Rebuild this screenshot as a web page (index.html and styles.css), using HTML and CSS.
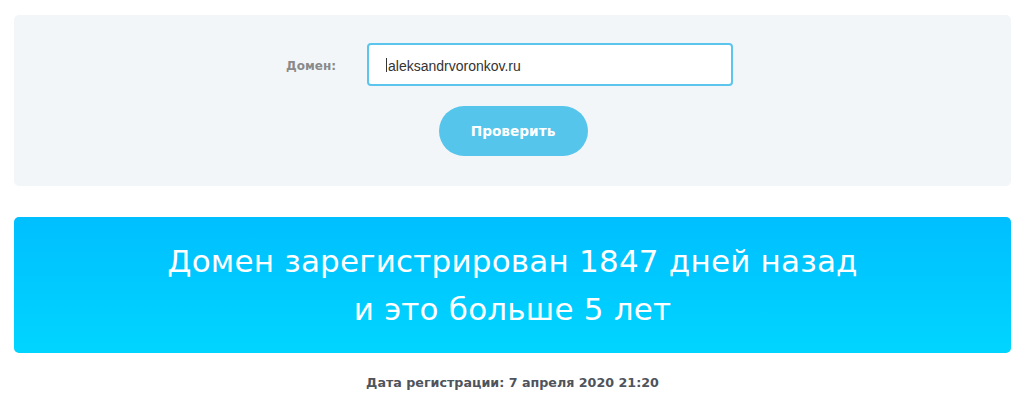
FILE: index.html
```html
<!DOCTYPE html>
<html lang="ru">
<head>
<meta charset="utf-8">
<title>Проверка домена</title>
<link rel="stylesheet" href="styles.css">
</head>
<body>
<div class="page">
  <form class="check-box">
    <div class="row">
      <label class="label" for="domain">Домен:</label>
      <div class="field"><span class="caret"></span><input id="domain" class="input" type="text" value="aleksandrvoronkov.ru"></div>
    </div>
    <button type="button" class="btn">Проверить</button>
  </form>
  <div class="result">
    <p class="result-text">Домен зарегистрирован 1847 дней назад<br>и это больше 5 лет</p>
  </div>
  <p class="date">Дата регистрации: 7 апреля 2020 21:20</p>
</div>
</body>
</html>
```

FILE: styles.css
```css
* { box-sizing: border-box; }
html, body { margin: 0; padding: 0; background: #fff; }
body { font-family: "DejaVu Sans", "Open Sans", sans-serif; }
.page { padding: 15px 20px 0 14px; }
.check-box {
  background: #f3f6f8;
  border-radius: 5px;
  height: 171px;
  padding-top: 28px;
  display: flex;
  flex-direction: column;
  align-items: center;
  margin: 0;
}
.row { display: flex; align-items: center; margin-left: -6px; }
.label {
  width: 81px;
  font-size: 12px;
  font-weight: 700;
  color: #8a8a8a;
  padding-top: 2px;
}
.field { position: relative; }
.caret {
  position: absolute; left: 19px; top: 15px;
  width: 1px; height: 14px; background: #333;
}
.input {
  width: 366px;
  height: 43px;
  border: 2px solid #5bc5ee;
  border-radius: 4px;
  padding: 2px 0 0 19px;
  font-family: "Liberation Sans", Arial, sans-serif;
  font-size: 14px;
  color: #333;
  background: #fff;
  outline: none;
}
.btn {
  margin-top: 20px;
  width: 149px;
  height: 50px;
  border: 0;
  border-radius: 25px;
  background: #56c5eb;
  color: #fff;
  font-family: inherit;
  font-size: 13.7px;
  font-weight: 700;
  margin-left: 1px;
}
.result {
  margin-top: 31px;
  height: 136px;
  border-radius: 5px;
  background: linear-gradient(180deg, #00bfff 0%, #00d5ff 100%);
  display: flex;
  align-items: center;
  justify-content: center;
}
.result-text {
  margin: 0;
  text-align: center;
  color: #fff;
  font-size: 31px;
  letter-spacing: 0.2px;
  line-height: 48px;
  font-weight: 400;
}
.date {
  margin: 22px 0 0;
  text-align: center;
  font-size: 12.7px;
  font-weight: 700;
  color: #4f545c;
}
```
